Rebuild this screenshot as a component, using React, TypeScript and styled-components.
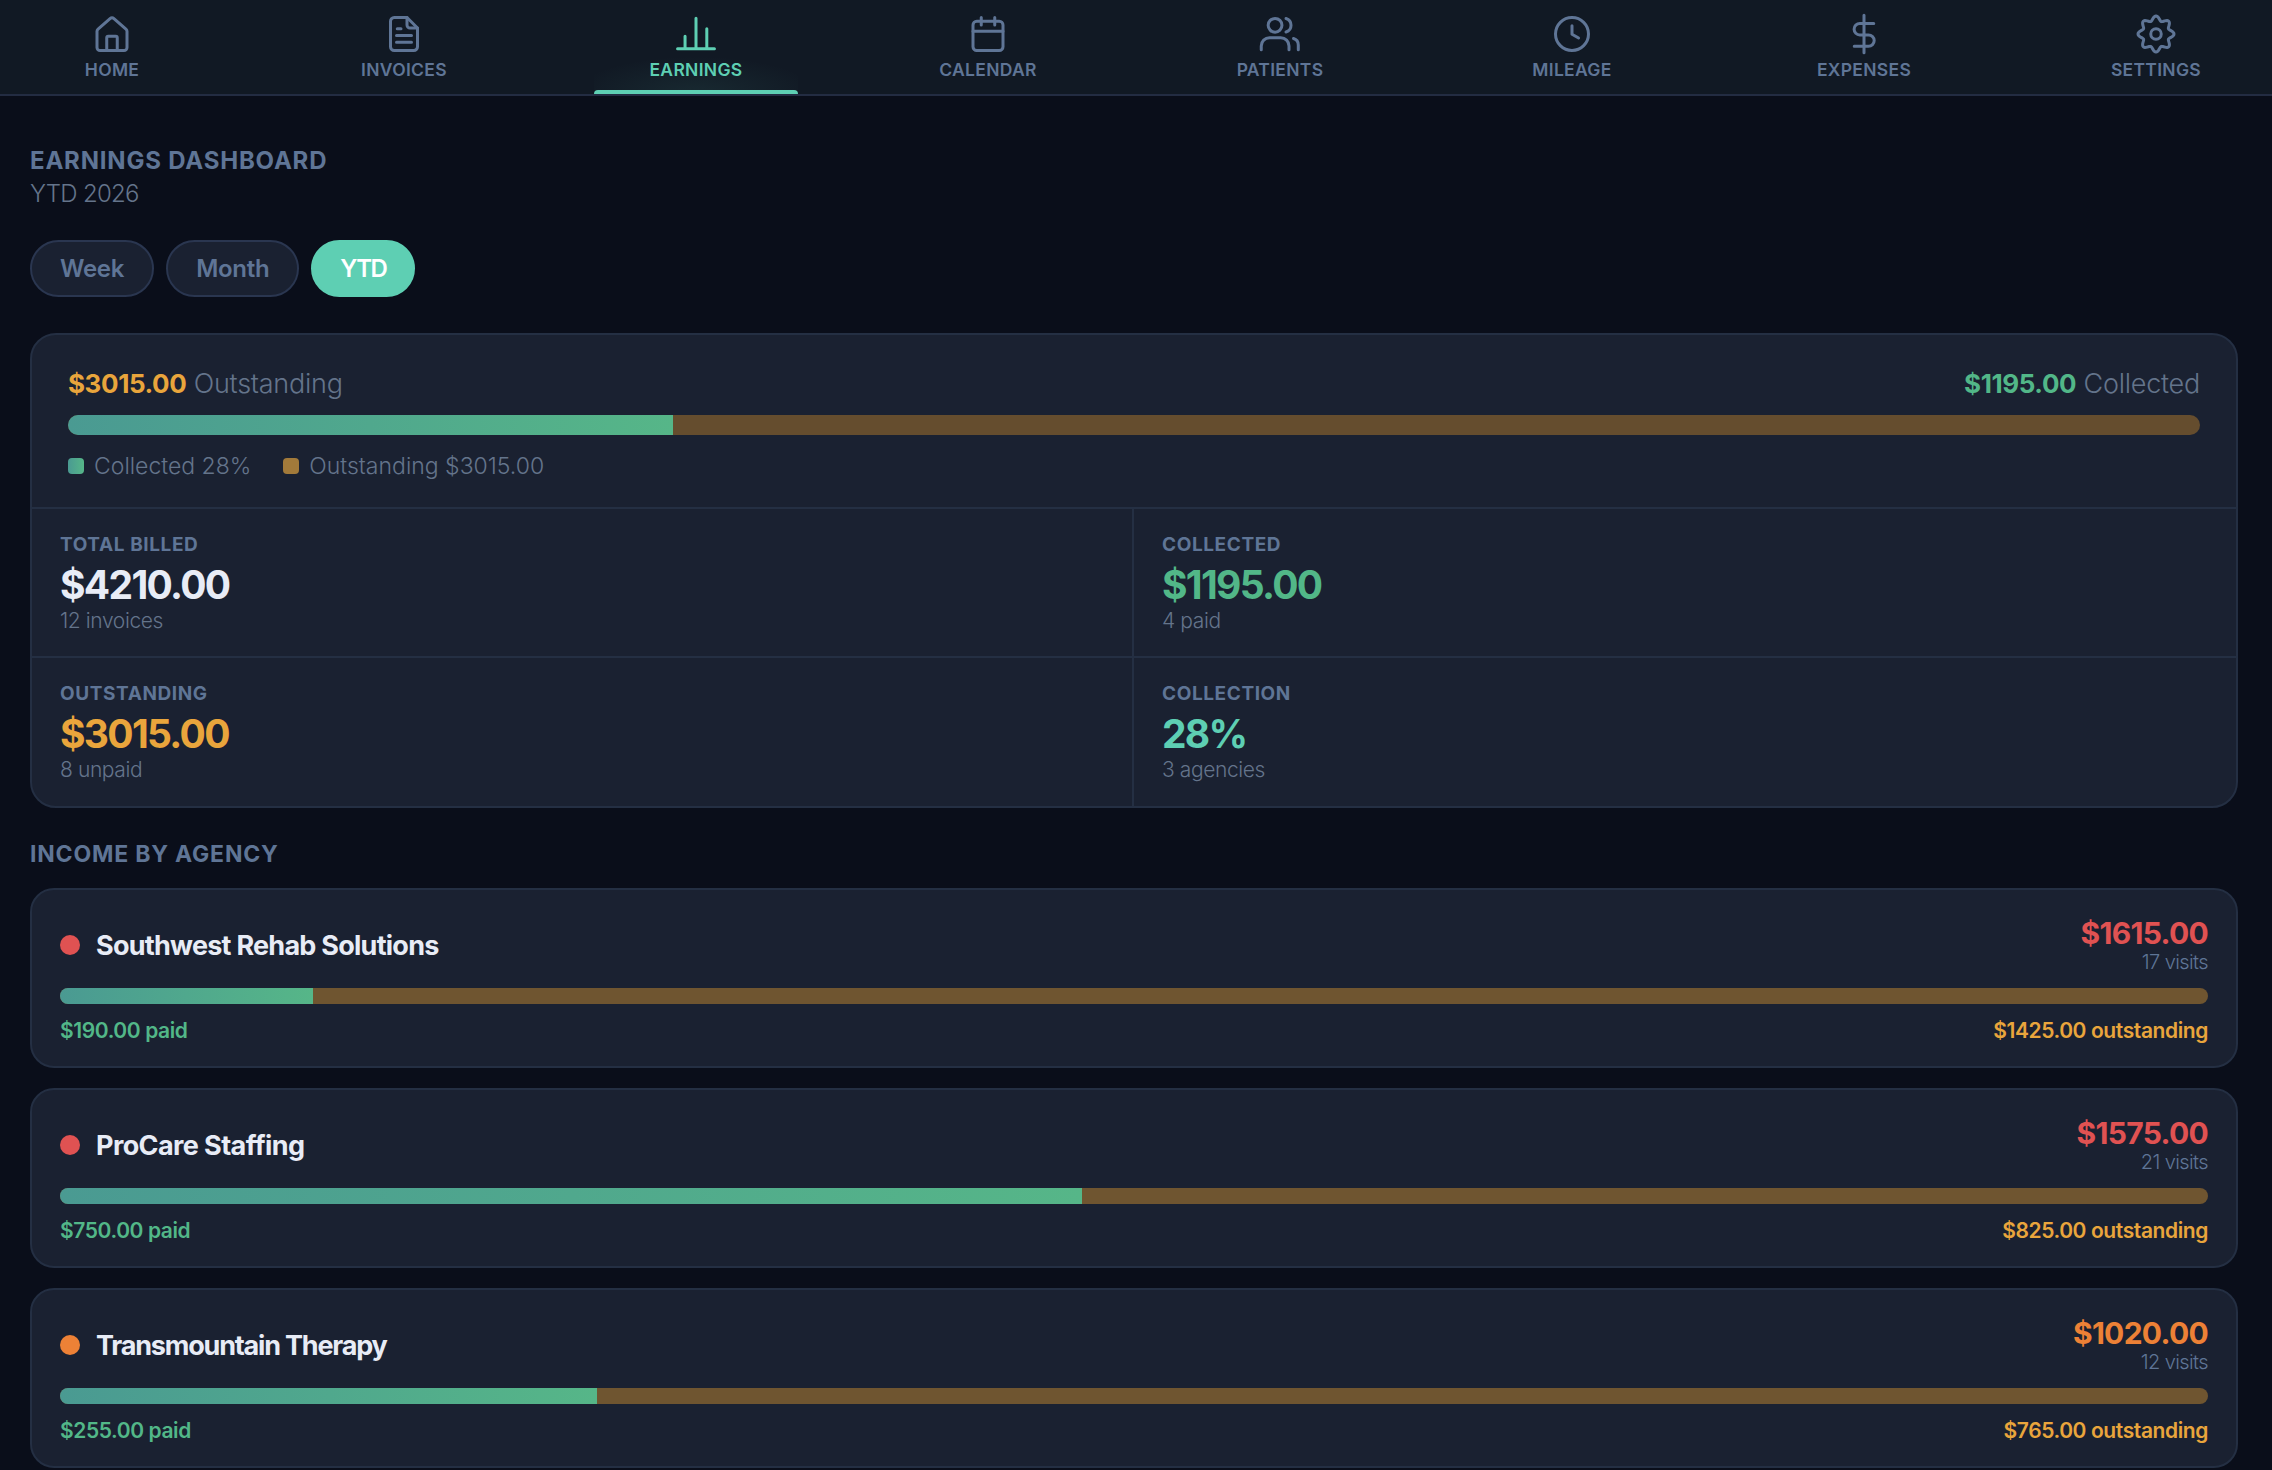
import styled, { createGlobalStyle } from "styled-components";

const GlobalStyle = createGlobalStyle`
    html, body {
        margin: 0;
        height: 100%;
        overflow: hidden;
        background: #0a0e1a;
    }
    * { box-sizing: border-box; }
    body {
        font-family: "Inter", "Liberation Sans", sans-serif;
    }
`;

const gearPath = (() => {
    const pts: string[] = [];
    for (let i = 0; i < 128; i++) {
        const a = (i / 128) * Math.PI * 2;
        const r = 10.5 + 1.5 * Math.cos(a * 8);
        pts.push(`${(12 + r * Math.sin(a)).toFixed(2)} ${(12 - r * Math.cos(a)).toFixed(2)}`);
    }
    return `M${pts.join("L")}Z`;
})();

const icons: Record<string, React.ReactNode> = {
    home: (
        <>
            <path d="M2 10.2a2 2 0 0 1 .7-1.5l8-7a2 2 0 0 1 2.6 0l8 7a2 2 0 0 1 .7 1.5V21a2 2 0 0 1-2 2H4a2 2 0 0 1-2-2z" />
            <path d="M8.5 23v-8.5a1 1 0 0 1 1-1h5a1 1 0 0 1 1 1V23" />
        </>
    ),
    invoices: (
        <>
            <path d="M14 1H5.5a2.5 2.5 0 0 0-2.5 2.5v17A2.5 2.5 0 0 0 5.500 23h13a2.500 2.500 0 0 0 2.500-2.500V8z" />
            <path d="M14 1v5a2 2 0 0 0 2 2h5" />
            <path d="M7.500 8.500h2.500M7 13h10M7 17.500h10" />
        </>
    ),
    earnings: <path d="M-0.300 21.800H24.300M12 1.500V21.800M4.700 13.500V21.800M19.200 8.500V21.800" />,
    calendar: (
        <>
            <rect x="2" y="3.500" width="20" height="19.500" rx="2.500" />
            <path d="M7.500 1v5M16.500 1v5M2 10.200h20" />
        </>
    ),
    patients: (
        <>
            <circle cx="8.700" cy="6.200" r="4.600" />
            <path d="M16 1.700a4.700 4.700 0 0 1 0 9" />
            <path d="M-0.500 22.500v-2.500a5.500 5.500 0 0 1 5.500-5.500h7.500a5.500 5.500 0 0 1 5.500 5.500v2.500" />
            <path d="M21 15a4.500 4.500 0 0 1 3.200 4.300v3.200" />
        </>
    ),
    mileage: (
        <>
            <circle cx="12" cy="12" r="11" />
            <path d="M12 6.500V12.200l4.400 2.500" />
        </>
    ),
    expenses: (
        <path d="M12 -0.500V24.500M18.500 5H9.200a3.800 3.800 0 0 0 0 7.600h5.800a3.800 3.800 0 0 1 0 7.600H5.500" />
    ),
    settings: (
        <>
            <path d={gearPath} />
            <circle cx="12" cy="12" r="3.500" />
        </>
    ),
};

const navItems = [
    { key: "home", label: "HOME" },
    { key: "invoices", label: "INVOICES" },
    { key: "earnings", label: "EARNINGS", active: true },
    { key: "calendar", label: "CALENDAR" },
    { key: "patients", label: "PATIENTS" },
    { key: "mileage", label: "MILEAGE" },
    { key: "expenses", label: "EXPENSES" },
    { key: "settings", label: "SETTINGS" },
];

const stats = [
    { label: "TOTAL BILLED", value: "$4210.00", sub: "12 invoices", color: "#e8ecf6" },
    { label: "COLLECTED", value: "$1195.00", sub: "4 paid", color: "#52b788" },
    { label: "OUTSTANDING", value: "$3015.00", sub: "8 unpaid", color: "#e9a53c" },
    { label: "COLLECTION", value: "28%", sub: "3 agencies", color: "#5ecfb3" },
];

const agencies = [
    { name: "Southwest Rehab Solutions", tracking: -0.75, total: "$1615.00", visits: "17 visits", paid: "$190.00 paid", due: "$1425.00 outstanding", pct: 11.76, color: "#e05252" },
    { name: "ProCare Staffing", tracking: -0.6, total: "$1575.00", visits: "21 visits", paid: "$750.00 paid", due: "$825.00 outstanding", pct: 47.6, color: "#e05252" },
    { name: "Transmountain Therapy", tracking: -1.2, total: "$1020.00", visits: "12 visits", paid: "$255.00 paid", due: "$765.00 outstanding", pct: 25, color: "#ed8136" },
];

export default function App() {
    return (
        <>
            <GlobalStyle />
            <Nav>
                {navItems.map((item) => (
                    <NavItem key={item.key} $active={!!item.active}>
                        <NavIcon viewBox="0 0 24 24">{icons[item.key]}</NavIcon>
                        <NavLabel>{item.label}</NavLabel>
                    </NavItem>
                ))}
            </Nav>
            <Content>
                <Title>EARNINGS DASHBOARD</Title>
                <Period>YTD 2026</Period>
                <Pills>
                    <Pill>Week</Pill>
                    <Pill>Month</Pill>
                    <Pill $active>YTD</Pill>
                </Pills>
                <Card>
                    <Summary>
                        <SummaryRow>
                            <SummaryText>
                                <SummaryAmount $color="#e9a53c">$3015.00</SummaryAmount> Outstanding
                            </SummaryText>
                            <SummaryText>
                                <SummaryAmount $color="#52b788">$1195.00</SummaryAmount> Collected
                            </SummaryText>
                        </SummaryRow>
                        <SummaryBar>
                            <BarFill style={{ width: "28.4%" }} />
                        </SummaryBar>
                        <Legend>
                            <LegendItem>
                                <Swatch $color="linear-gradient(90deg, #4a9a92, #56b688)" />
                                Collected 28%
                            </LegendItem>
                            <LegendItem>
                                <Swatch $color="#a27a3a" />
                                Outstanding $3015.00
                            </LegendItem>
                        </Legend>
                    </Summary>
                    <StatGrid>
                        {stats.map((s) => (
                            <Stat key={s.label}>
                                <StatLabel>{s.label}</StatLabel>
                                <StatValue $color={s.color}>{s.value}</StatValue>
                                <StatSub>{s.sub}</StatSub>
                            </Stat>
                        ))}
                    </StatGrid>
                </Card>
                <SectionTitle>INCOME BY AGENCY</SectionTitle>
                <AgencyList>
                    {agencies.map((a) => (
                        <AgencyCard key={a.name}>
                            <AgencyTop>
                                <AgencyName $tracking={a.tracking}>
                                    <Dot $color={a.color} />
                                    {a.name}
                                </AgencyName>
                                <AgencyTotals>
                                    <AgencyTotal $color={a.color}>{a.total}</AgencyTotal>
                                    <Visits>{a.visits}</Visits>
                                </AgencyTotals>
                            </AgencyTop>
                            <AgencyBar>
                                <BarFill style={{ width: `${a.pct}%` }} />
                            </AgencyBar>
                            <AgencyBottom>
                                <Amount $color="#52b788">{a.paid}</Amount>
                                <Amount $color="#e9a53c">{a.due}</Amount>
                            </AgencyBottom>
                        </AgencyCard>
                    ))}
                </AgencyList>
            </Content>
        </>
    );
}

const Nav = styled.nav`
    height: 96px;
    padding: 0 14px 0 10px;
    display: flex;
    justify-content: space-between;
    background: #111924;
    border-bottom: 2px solid #232c42;
`;

const NavItem = styled.div<{ $active?: boolean }>`
    position: relative;
    width: 204px;
    height: 94px;
    padding-top: 16px;
    display: flex;
    flex-direction: column;
    align-items: center;
    color: ${(p) => (p.$active ? "#5ecfb3" : "#5f7596")};
    ${(p) => p.$active && `background: radial-gradient(ellipse 60% 40% at 50% 100%, rgba(94, 207, 179, 0.09), transparent);`}

    &::after {
        content: "";
        display: ${(p) => (p.$active ? "block" : "none")};
        position: absolute;
        left: 0;
        right: 0;
        bottom: 0;
        height: 4px;
        border-radius: 4px 4px 0 0;
        background: #5ecfb3;
    }
`;

const NavIcon = styled.svg`
    width: 36px;
    height: 36px;
    overflow: visible;
    fill: none;
    stroke: currentColor;
    stroke-width: 2;
    stroke-linecap: round;
    stroke-linejoin: round;
`;

const NavLabel = styled.span`
    margin-top: 8px;
    font-size: 17.5px;
    line-height: 20px;
    font-weight: 600;
    letter-spacing: 0.3px;
`;

const Content = styled.main`
    padding: 51px 34px 0 30px;
`;

const Title = styled.h1`
    margin: 0;
    font-size: 24px;
    line-height: 28px;
    font-weight: 700;
    letter-spacing: 0.8px;
    color: #5f7596;
`;

const Period = styled.div`
    margin-top: 4px;
    font-size: 24px;
    line-height: 30px;
    font-weight: 300;
    letter-spacing: -0.7px;
    color: #64748b;
`;

const Pills = styled.div`
    margin-top: 31px;
    display: flex;
    gap: 12px;
`;

const Pill = styled.button<{ $active?: boolean }>`
    height: 57px;
    padding: 0 ${(p) => (p.$active ? "27px" : "28px")};
    border-radius: 29px;
    border: 2px solid ${(p) => (p.$active ? "#5ecfb3" : "#2a3650")};
    background: ${(p) => (p.$active ? "#5ecfb3" : "#1a2131")};
    color: ${(p) => (p.$active ? "#ffffff" : "#5f7596")};
    font-family: inherit;
    font-size: 24px;
    font-weight: 600;
    letter-spacing: ${(p) => (p.$active ? "-1.5px" : "-0.3px")};
`;

const Card = styled.section`
    margin-top: 36px;
    height: 475px;
    border: 2px solid #242f43;
    border-radius: 26px;
    background: #1a2131;
    display: flex;
    flex-direction: column;
`;

const Summary = styled.div`
    height: 174px;
    padding: 33px 36px 0;
    border-bottom: 2px solid #242f43;
`;

const SummaryRow = styled.div`
    display: flex;
    justify-content: space-between;
`;

const SummaryText = styled.div`
    font-size: 27px;
    line-height: 32px;
    font-weight: 300;
    letter-spacing: -0.25px;
    color: #64748b;
`;

const SummaryAmount = styled.span<{ $color: string }>`
    font-size: 26px;
    font-weight: 700;
    letter-spacing: -0.4px;
    color: ${(p) => p.$color};
`;

const Track = styled.div`
    display: flex;
    border-radius: 10px;
    overflow: hidden;
`;

const SummaryBar = styled(Track)`
    margin-top: 15px;
    height: 20px;
    background: #654d2e;
`;

const AgencyBar = styled(Track)`
    margin-top: 14px;
    height: 16px;
    background: #6f5530;
`;

const BarFill = styled.div`
    height: 100%;
    background: linear-gradient(90deg, #4a9a92, #56b688);
`;

const Legend = styled.div`
    margin-top: 18px;
    display: flex;
    gap: 32px;
`;

const LegendItem = styled.div`
    display: flex;
    align-items: center;
    gap: 10px;
    font-size: 23px;
    line-height: 26px;
    font-weight: 300;
    color: #64748b;
`;

const Swatch = styled.span<{ $color: string }>`
    width: 16px;
    height: 16px;
    border-radius: 4px;
    background: ${(p) => p.$color};
`;

const StatGrid = styled.div`
    flex: 1;
    display: grid;
    grid-template-columns: 1fr 1fr;
    grid-template-rows: 1fr 1fr;
`;

const Stat = styled.div`
    padding: 25px 28px 0;

    &:nth-child(odd) {
        border-right: 2px solid #242f43;
    }
    &:nth-child(-n + 2) {
        border-bottom: 2px solid #242f43;
    }
`;

const StatLabel = styled.div`
    font-size: 19px;
    line-height: 22px;
    font-weight: 700;
    letter-spacing: 0.6px;
    color: #5f7596;
`;

const StatValue = styled.div<{ $color: string }>`
    margin-top: 6px;
    font-size: 39px;
    line-height: 46px;
    font-weight: 700;
    letter-spacing: -1.7px;
    color: ${(p) => p.$color};
`;

const StatSub = styled.div`
    font-size: 21px;
    line-height: 26px;
    font-weight: 300;
    letter-spacing: -0.4px;
    color: #64748b;
`;

const SectionTitle = styled.h2`
    margin: 32px 0 0;
    font-size: 23px;
    line-height: 28px;
    font-weight: 700;
    letter-spacing: 0.8px;
    color: #5f7596;
`;

const AgencyList = styled.div`
    margin-top: 20px;
    display: flex;
    flex-direction: column;
    gap: 20px;
`;

const AgencyCard = styled.article`
    height: 180px;
    padding: 26px 28px 0;
    border: 2px solid #242f43;
    border-radius: 24px;
    background: #1a2131;
`;

const AgencyTop = styled.div`
    display: flex;
    justify-content: space-between;
    align-items: center;
`;

const AgencyName = styled.div<{ $tracking: number }>`
    display: flex;
    align-items: center;
    gap: 16px;
    font-size: 27px;
    font-weight: 700;
    letter-spacing: ${(p) => p.$tracking}px;
    color: #e8ecf6;
`;

const Dot = styled.span<{ $color: string }>`
    width: 20px;
    height: 20px;
    border-radius: 50%;
    background: ${(p) => p.$color};
`;

const AgencyTotals = styled.div`
    text-align: right;
`;

const AgencyTotal = styled.div<{ $color: string }>`
    font-size: 30px;
    line-height: 34px;
    font-weight: 700;
    letter-spacing: -0.7px;
    color: ${(p) => p.$color};
`;

const Visits = styled.div`
    font-size: 20px;
    line-height: 24px;
    font-weight: 300;
    letter-spacing: -0.6px;
    color: #5f7596;
`;

const AgencyBottom = styled.div`
    margin-top: 14px;
    display: flex;
    justify-content: space-between;
`;

const Amount = styled.div<{ $color: string }>`
    font-size: 21px;
    line-height: 26px;
    font-weight: 600;
    letter-spacing: -0.4px;
    color: ${(p) => p.$color};
`;
